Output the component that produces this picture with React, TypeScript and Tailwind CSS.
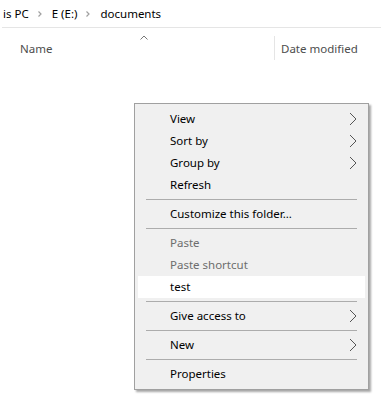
import React from 'react';

type Entry =
  | { kind: 'item'; label: string; sub?: boolean; disabled?: boolean; hot?: boolean }
  | { kind: 'sep' };

const menu: Entry[] = [
  { kind: 'item', label: 'View', sub: true },
  { kind: 'item', label: 'Sort by', sub: true },
  { kind: 'item', label: 'Group by', sub: true },
  { kind: 'item', label: 'Refresh' },
  { kind: 'sep' },
  { kind: 'item', label: 'Customize this folder...' },
  { kind: 'sep' },
  { kind: 'item', label: 'Paste', disabled: true },
  { kind: 'item', label: 'Paste shortcut', disabled: true },
  { kind: 'item', label: 'test', hot: true },
  { kind: 'sep' },
  { kind: 'item', label: 'Give access to', sub: true },
  { kind: 'sep' },
  { kind: 'item', label: 'New', sub: true },
  { kind: 'sep' },
  { kind: 'item', label: 'Properties' },
];

function Chevron() {
  return (
    <svg width="8" height="14" viewBox="0 0 8 14" className="absolute right-[8px] top-[4px]">
      <polyline points="1,1 7,7 1,13" fill="none" stroke="#555" strokeWidth="1" />
    </svg>
  );
}

function Crumb() {
  return (
    <svg width="6" height="8" viewBox="0 0 6 8" className="ml-[8px] mr-[9px]">
      <polyline points="1.5,1.5 4,4 1.5,6.5" fill="none" stroke="#a0a0a0" strokeWidth="1.2" />
    </svg>
  );
}

export default function App() {
  return (
    <div
      className="relative w-[381px] h-[413px] bg-white overflow-hidden text-[11.5px] text-black"
      style={{ fontFamily: '"Noto Sans", "Open Sans", sans-serif' }}
    >
      {/* Breadcrumb */}
      <div className="flex items-center h-[28px] pl-[1px] border-b border-[#e5e5e5] ml-[2px]">
        <span>is PC</span>
        <Crumb />
        <span>E (E:)</span>
        <Crumb />
        <span>documents</span>
      </div>

      {/* Column headers */}
      <div className="relative flex h-[40px] text-[#4d4d4d]">
        <div className="relative w-[274px] pl-[20px] pt-[12px]">
          <span>Name</span>
          <svg width="8" height="5" viewBox="0 0 8 5" className="absolute left-[140px] top-[7px]">
            <polyline points="0.5,4.5 4,1 7.5,4.5" fill="none" stroke="#777" strokeWidth="1" />
          </svg>
        </div>
        <div className="w-px h-[24px] mt-[8px] bg-[#e5e5e5]" />
        <div className="pl-[6px] pt-[12px]">Date modified</div>
      </div>

      {/* Context menu */}
      <div className="absolute left-[134px] top-[103px] w-[235px] bg-[#f0f0f0] border border-[#a0a0a0] py-[4px] px-[3px] shadow-[2px_2px_2px_rgba(0,0,0,0.35)]">
        {menu.map((e, i) =>
          e.kind === 'sep' ? (
            <div key={i} className="h-[7px] flex items-center pl-[8px] pr-[8px]">
              <div className="h-px w-full bg-[#acacac]" />
            </div>
          ) : (
            <div
              key={i}
              className={
                'relative h-[22px] flex items-center pl-[32px] ' +
                (e.hot ? 'bg-white ' : '') +
                (e.disabled ? 'text-[#6d6d6d]' : 'text-black')
              }
            >
              {e.label}
              {e.sub && <Chevron />}
            </div>
          )
        )}
      </div>
    </div>
  );
}
